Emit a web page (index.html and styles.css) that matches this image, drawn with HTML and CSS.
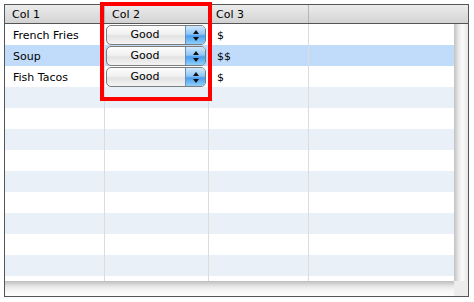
FILE: index.html
```html
<!DOCTYPE html>
<html>
<head>
<meta charset="utf-8">
<link rel="stylesheet" href="styles.css">
</head>
<body>
<div class="frame">
  <div class="header">
    <div class="hcell c1">Col 1</div>
    <div class="hcell c2">Col 2</div>
    <div class="hcell c3">Col 3</div>
    <div class="hcell c4"></div>
  </div>
  <div class="middle">
    <div class="rows">
      <div class="row"><div class="cell c1">French Fries</div><div class="cell c2"><div class="popup"><span class="pl">Good</span><span class="pa"><i class="up"></i><i class="dn"></i></span></div></div><div class="cell c3">$</div><div class="cell c4"></div></div>
      <div class="row sel"><div class="cell c1">Soup</div><div class="cell c2"><div class="popup"><span class="pl">Good</span><span class="pa"><i class="up"></i><i class="dn"></i></span></div></div><div class="cell c3">$$</div><div class="cell c4"></div></div>
      <div class="row"><div class="cell c1">Fish Tacos</div><div class="cell c2"><div class="popup"><span class="pl">Good</span><span class="pa"><i class="up"></i><i class="dn"></i></span></div></div><div class="cell c3">$</div><div class="cell c4"></div></div>
      <div class="row alt"><div class="cell c1"></div><div class="cell c2"></div><div class="cell c3"></div><div class="cell c4"></div></div>
      <div class="row"><div class="cell c1"></div><div class="cell c2"></div><div class="cell c3"></div><div class="cell c4"></div></div>
      <div class="row alt"><div class="cell c1"></div><div class="cell c2"></div><div class="cell c3"></div><div class="cell c4"></div></div>
      <div class="row"><div class="cell c1"></div><div class="cell c2"></div><div class="cell c3"></div><div class="cell c4"></div></div>
      <div class="row alt"><div class="cell c1"></div><div class="cell c2"></div><div class="cell c3"></div><div class="cell c4"></div></div>
      <div class="row"><div class="cell c1"></div><div class="cell c2"></div><div class="cell c3"></div><div class="cell c4"></div></div>
      <div class="row alt"><div class="cell c1"></div><div class="cell c2"></div><div class="cell c3"></div><div class="cell c4"></div></div>
      <div class="row"><div class="cell c1"></div><div class="cell c2"></div><div class="cell c3"></div><div class="cell c4"></div></div>
      <div class="row alt"><div class="cell c1"></div><div class="cell c2"></div><div class="cell c3"></div><div class="cell c4"></div></div>
      <div class="row"><div class="cell c1"></div><div class="cell c2"></div><div class="cell c3"></div><div class="cell c4"></div></div>
    </div>
    <div class="vscroll"></div>
  </div>
  <div class="bottom">
    <div class="hscroll"></div>
    <div class="corner"></div>
  </div>
  <div class="highlight"></div>
</div>
</body>
</html>
```
FILE: styles.css
```css
html, body {
  margin: 0;
  padding: 0;
  background: #ffffff;
}
body {
  padding: 4px 0 0 4px;
  font-family: "DejaVu Sans", "Liberation Sans", sans-serif;
  font-size: 11px;
  color: #000;
}
.frame {
  position: relative;
  width: 463px;
  border: 1px solid #555555;
  display: flex;
  flex-direction: column;
}
.header {
  display: flex;
  height: 18px;
  border-bottom: 1px solid #555555;
  background: linear-gradient(#ececec, #d3d3d3);
}
.hcell {
  box-sizing: border-box;
  height: 18px;
  line-height: 20px;
  padding-left: 7px;
  border-right: 1px solid #b5b5b5;
}
.hcell.c4 { border-right: none; flex: 1; }
.c1 { width: 100px; }
.c2 { width: 104px; }
.c3 { width: 100px; }
.c4 { width: 145px; }
.middle {
  display: flex;
  height: 257px;
}
.rows {
  width: 449px;
  overflow: hidden;
  display: flex;
  flex-direction: column;
}
.row {
  display: flex;
  flex: none;
  height: 21px;
  background: #ffffff;
}
.row.alt { background: #eaf0f8; }
.row.sel { background: #c0dcfa; }
.cell {
  box-sizing: border-box;
  height: 21px;
  line-height: 23px;
  padding-left: 8px;
  border-right: 1px solid #dcdcdc;
  white-space: nowrap;
}
.cell.c2 { padding: 1px 0 0 1px; line-height: 18px; }
.cell.c3 { padding-left: 8px; }
.cell.c4 { border-right: none; }
.popup {
  box-sizing: border-box;
  width: 100px;
  height: 20px;
  border: 1px solid #7c7c7c;
  border-radius: 5px;
  display: flex;
  overflow: hidden;
  background: linear-gradient(#fdfdfd 0%, #f1f1f1 45%, #e2e2e2 55%, #f4f4f4 100%);
  box-shadow: 0 1px 0 rgba(0,0,0,0.08);
}
.pl {
  flex: 1;
  text-align: center;
  line-height: 18px;
  padding-right: 2px;
}
.pa {
  width: 19px;
  display: flex;
  flex-direction: column;
  align-items: center;
  justify-content: center;
  gap: 3px;
  border-left: 1px solid #6d8fb8;
  background: linear-gradient(#d2e9fd 0%, #8ec6f6 45%, #4a9ef0 55%, #8fd0fb 100%);
}
.pa i {
  display: block;
  width: 0;
  height: 0;
  border-left: 3px solid transparent;
  border-right: 3px solid transparent;
}
.pa .up { border-bottom: 4px solid #111; }
.pa .dn { border-top: 4px solid #111; }
.vscroll {
  width: 14px;
  background: linear-gradient(to right, #c2c2c2 0%, #ebebeb 35%, #fbfbfb 60%, #e6e6e6 100%);
}
.bottom {
  display: flex;
  height: 15px;
}
.hscroll {
  width: 449px;
  background: linear-gradient(#bdbdbd 0%, #e6e6e6 35%, #f6f6f6 65%, #fdfdfd 100%);
}
.corner {
  width: 14px;
  background: #ececec;
}
.highlight {
  position: absolute;
  left: 95px;
  top: -3px;
  width: 104px;
  height: 91px;
  border: 4px solid #ff0000;
  pointer-events: none;
}
```
